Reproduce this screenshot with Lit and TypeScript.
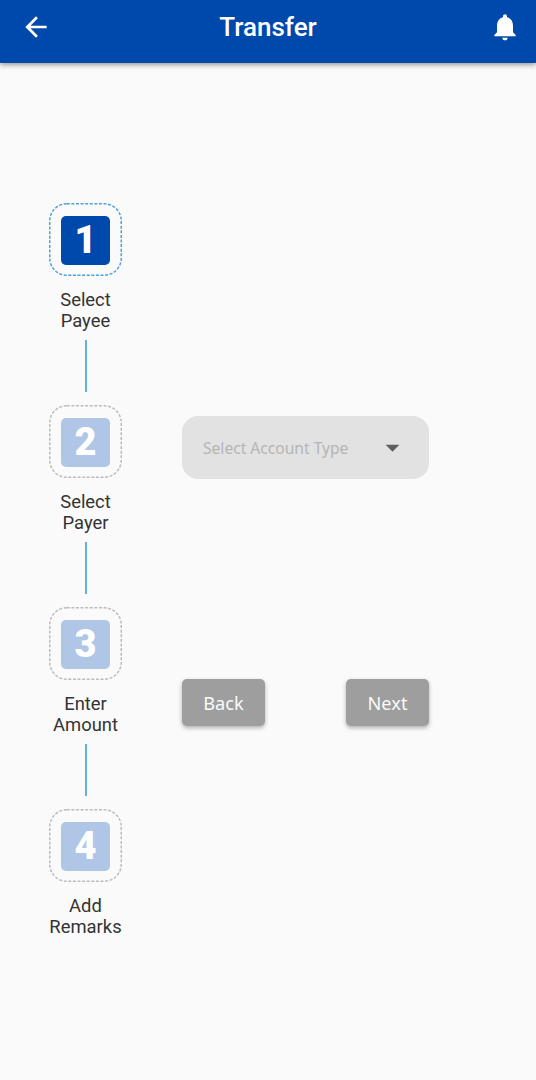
import { LitElement, html, css, svg } from "lit";
import { customElement } from "lit/decorators.js";

const steps = [
  { n: "1", a: "Select", b: "Payee", active: true },
  { n: "2", a: "Select", b: "Payer", active: false },
  { n: "3", a: "Enter", b: "Amount", active: false },
  { n: "4", a: "Add", b: "Remarks", active: false },
];

@customElement("app-root")
export class AppRoot extends LitElement {
  static styles = css`
    :host { display: block; height: 1080px; background: #fafafa; overflow: hidden; font-family: Roboto, sans-serif; }
    .bar {
      height: 63px; background: #0049ac; box-shadow: 0 2px 5px rgba(0,0,0,.38);
      display: grid; grid-template-columns: 1fr auto 1fr; align-items: center; padding: 0 15px 9px; box-sizing: border-box;
    }
    .bar svg { width: 32px; height: 32px; fill: #fff; display: block; }
    .bar .back { margin-left: 5px; }
    .bar .bell { justify-self: end; }
    .title { color: #fff; font-size: 26px; font-weight: 500; line-height: 32px; }
    .main { display: flex; padding: 140px 0 0 49px; }
    .stepper { display: flex; flex-direction: column; align-items: center; width: 73px; }
    .box {
      position: relative; width: 73px; height: 73px; box-sizing: border-box; padding-top: 2px;
      display: flex; align-items: center; justify-content: center;
    }
    .dash { position: absolute; inset: 0; width: 73px; height: 73px; fill: none; stroke: #bcbcbc; stroke-width: 1.5; stroke-dasharray: 3 1.6; }
    .on .dash { stroke: #4aa3d6; }
    .num {
      width: 49px; height: 49px; border-radius: 5px; background: #b0c6e6; color: #fff;
      display: flex; align-items: center; justify-content: center;
      font-family: Roboto, sans-serif; font-weight: 900; font-size: 38px; line-height: 49px;
    }
    .on .num { background: #0049ac; }
    .label { margin-top: 13px; font-size: 18.4px; line-height: 21px; color: #333; text-align: center; white-space: nowrap; }
    .line { width: 2px; height: 52px; margin: 9px 0 13px; background: #62b2e0; }
    .form { margin-left: 60px; width: 247px; padding-top: 213px; display: flex; flex-direction: column; }
    .select {
      height: 63px; box-sizing: border-box; border-radius: 16px; background: #e2e2e2;
      display: flex; align-items: center; justify-content: space-between; padding: 0 20px 0 21px;
      font-family: "Noto Sans", sans-serif; font-size: 15.6px; color: #b5b5b5;
    }
    .select svg { width: 33px; height: 33px; fill: #5f5f5f; display: block; }
    .actions { display: flex; justify-content: space-between; margin-top: 200px; }
    .btn {
      width: 83px; height: 47px; border-radius: 5px; background: #9e9e9e; color: #fafafa; border: 0; padding: 0;
      font-family: "Noto Sans", sans-serif; font-size: 18.2px; box-shadow: 0 2px 4px rgba(0,0,0,.3);
    }
  `;

  render() {
    return html`
      <header class="bar">
        <svg class="back" viewBox="0 0 24 24"><path d="M20 11H7.83l5.59-5.59L12 4l-8 8 8 8 1.41-1.41L7.83 13H20v-2z"/></svg>
        <div class="title">Transfer</div>
        <svg class="bell" viewBox="0 0 24 24"><path d="M12 22c1.1 0 2-.9 2-2h-4c0 1.1.9 2 2 2zm6-6v-5c0-3.07-1.63-5.64-4.5-6.32V4c0-.83-.67-1.5-1.5-1.5s-1.5.67-1.5 1.5v.68C7.64 5.36 6 7.92 6 11v5l-2 2v1h16v-1l-2-2z"/></svg>
      </header>
      <main class="main">
        <div class="stepper">
          ${steps.map((s, i) => html`
            <div class="box ${s.active ? "on" : ""}">
              <svg class="dash" viewBox="0 0 73 73">${svg`<rect x="0.75" y="0.75" width="71.5" height="71.5" rx="17"></rect>`}</svg>
              <div class="num">${s.n}</div>
            </div>
            <div class="label">${s.a}<br />${s.b}</div>
            ${i < steps.length - 1 ? html`<div class="line"></div>` : ""}
          `)}
        </div>
        <div class="form">
          <div class="select">
            <span>Select Account Type</span>
            <svg viewBox="0 0 24 24"><path d="M7 10l5 5 5-5z"/></svg>
          </div>
          <div class="actions">
            <button class="btn">Back</button>
            <button class="btn">Next</button>
          </div>
        </div>
      </main>
    `;
  }
}
